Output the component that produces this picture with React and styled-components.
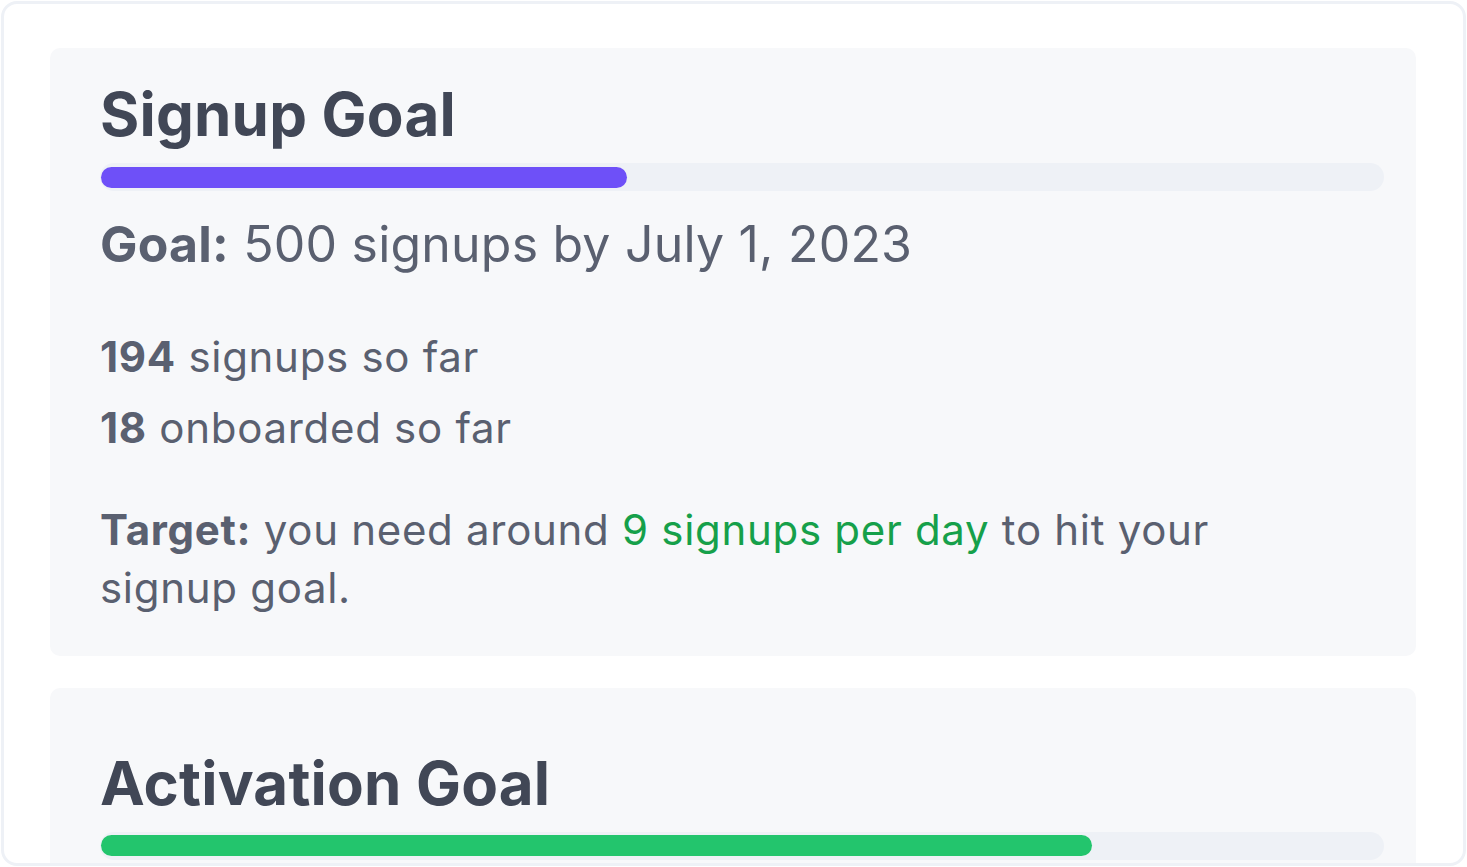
import styled, { createGlobalStyle } from "styled-components";

const GlobalStyle = createGlobalStyle`
  html, body {
    margin: 0;
    padding: 0;
    background: #ffffff;
  }
  body {
    font-family: Inter, "Noto Sans", "Liberation Sans", sans-serif;
  }
`;

const Frame = styled.div`
  margin: 1px 1px 0 1px;
  width: 1465px;
  height: 865px;
  box-sizing: border-box;
  border: 3px solid #eef1f6;
  border-radius: 16px;
  overflow: hidden;
  padding: 44px 47px 0 46px;
  display: flex;
  flex-direction: column;
  gap: 32px;
  background: #ffffff;
`;

const Card = styled.section`
  background: #f7f8fa;
  border-radius: 10px;
  padding: ${(p) => p.$top}px 32px 39px 50px;
  flex-shrink: 0;
`;

const Title = styled.h2`
  margin: 0;
  font-size: 60px;
  line-height: 72px;
  font-weight: 700;
  color: #414756;
  letter-spacing: 0.2px;
`;

const Track = styled.div`
  margin-top: 13px;
  height: 28px;
  border-radius: 14px;
  background: #eef1f6;
  display: flex;
  align-items: center;
  padding: 0 1px;
`;

const Fill = styled.div`
  height: 21px;
  border-radius: 11px;
  background: ${(p) => p.$color};
`;

const GoalLine = styled.p`
  margin: 25px 0 0;
  font-size: 50px;
  line-height: 57.6px;
  letter-spacing: 0.2px;
  color: #5a6070;
  b {
    font-weight: 700;
  }
`;

const Stats = styled.div`
  margin-top: 54px;
  display: flex;
  flex-direction: column;
  gap: 13px;
`;

const Body = styled.p`
  margin: 0;
  font-size: 42px;
  line-height: 58px;
  letter-spacing: 0.7px;
  color: #5a6070;
  b {
    font-weight: 700;
  }
`;

const Target = styled(Body)`
  margin-top: 44px;
  max-width: 1170px;
`;

const Accent = styled.span`
  color: #16a04a;
`;

const Progress = ({ pct, color }) => (
  <Track>
    <Fill $color={color} style={{ width: `${pct}%` }} />
  </Track>
);

export default function App() {
  return (
    <>
      <GlobalStyle />
      <Frame>
        <Card $top={30}>
          <Title>Signup Goal</Title>
          <Progress pct={41} color="#6e50f8" />
          <GoalLine>
            <b>Goal:</b> 500 signups by July 1, 2023
          </GoalLine>
          <Stats>
            <Body>
              <b>194</b> signups so far
            </Body>
            <Body>
              <b>18</b> onboarded so far
            </Body>
          </Stats>
          <Target>
            <b>Target:</b> you need around <Accent>9 signups per day</Accent> to
            hit your signup goal.
          </Target>
        </Card>
        <Card $top={59}>
          <Title>Activation Goal</Title>
          <Progress pct={77.3} color="#23c56d" />
        </Card>
      </Frame>
    </>
  );
}
